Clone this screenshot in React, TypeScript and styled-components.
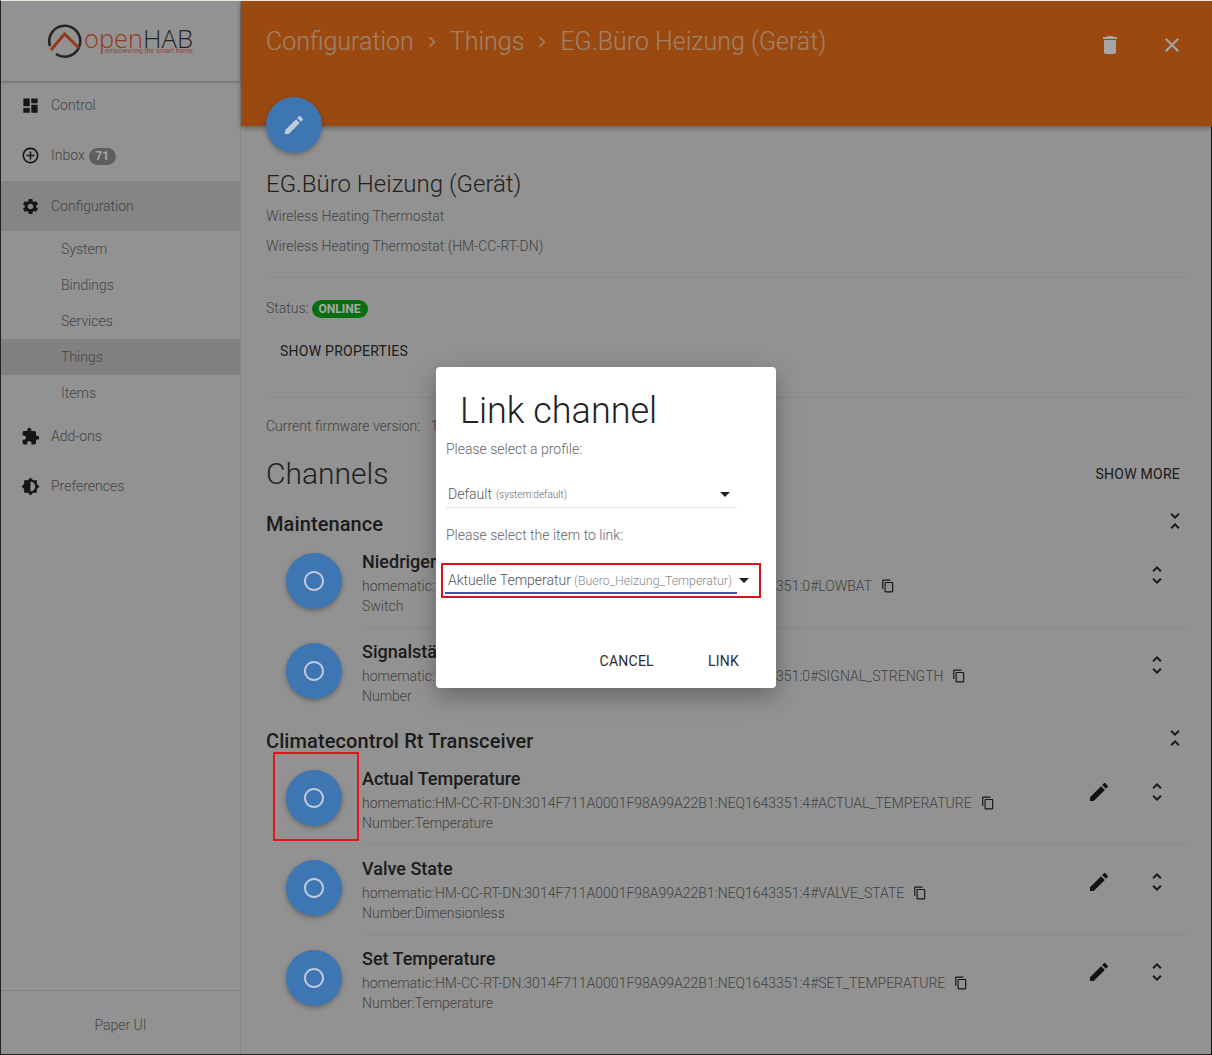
import React from "react";
import styled, { createGlobalStyle } from "styled-components";

const Global = createGlobalStyle`
  html, body { margin: 0; padding: 0; }
  body { font-family: Roboto, "Liberation Sans", sans-serif; font-weight: 300; font-size: 14px; color: #555; background: #e1e1e1; }
  * { box-sizing: border-box; }
`;

const P = {
  dashboard: "M3 13h8V3H3v10zm0 8h8v-6H3v6zm10 0h8V11h-8v10zm0-18v6h8V3h-8z",
  add: "M13 7h-2v4H7v2h4v4h2v-4h4v-2h-4V7zm-1-5C6.48 2 2 6.48 2 12s4.48 10 10 10 10-4.48 10-10S17.52 2 12 2zm0 18c-4.41 0-8-3.59-8-8s3.59-8 8-8 8 3.59 8 8-3.59 8-8 8z",
  settings: "M19.14 12.94c.04-.3.06-.61.06-.94 0-.32-.02-.64-.07-.94l2.03-1.58c.18-.14.23-.41.12-.61l-1.92-3.32c-.12-.22-.37-.29-.59-.22l-2.39.96c-.5-.38-1.03-.7-1.62-.94l-.36-2.54c-.04-.24-.24-.41-.48-.41h-3.84c-.24 0-.43.17-.47.41l-.36 2.54c-.59.24-1.13.57-1.62.94l-2.39-.96c-.22-.08-.47 0-.59.22L2.74 8.87c-.12.21-.08.47.12.61l2.03 1.58c-.05.3-.09.63-.09.94s.02.64.07.94l-2.03 1.58c-.18.14-.23.41-.12.61l1.92 3.32c.12.22.37.29.59.22l2.39-.96c.5.38 1.03.7 1.62.94l.36 2.54c.05.24.24.41.48.41h3.84c.24 0 .44-.17.47-.41l.36-2.54c.59-.24 1.13-.56 1.62-.94l2.39.96c.22.08.47 0 .59-.22l1.92-3.32c.12-.22.07-.47-.12-.61l-2.01-1.58zM12 15.6c-1.98 0-3.6-1.62-3.6-3.6s1.62-3.6 3.6-3.6 3.6 1.62 3.6 3.6-1.62 3.6-3.6 3.6z",
  extension: "M20.5 11H19V7c0-1.1-.9-2-2-2h-4V3.5C13 2.12 11.88 1 10.5 1S8 2.12 8 3.5V5H4c-1.1 0-1.99.9-1.99 2v3.8H3.5c1.49 0 2.7 1.21 2.7 2.7s-1.21 2.7-2.7 2.7H2V20c0 1.1.9 2 2 2h3.8v-1.5c0-1.49 1.21-2.7 2.7-2.7 1.49 0 2.7 1.21 2.7 2.7V22H17c1.1 0 2-.9 2-2v-4h1.5c1.38 0 2.5-1.12 2.5-2.5S21.88 11 20.5 11z",
  brightness: "M20 15.31L23.31 12 20 8.69V4h-4.69L12 .69 8.69 4H4v4.69L.69 12 4 15.31V20h4.69L12 23.31 15.31 20H20v-4.69zM12 18V6c3.31 0 6 2.69 6 6s-2.69 6-6 6z",
  edit: "M3 17.25V21h3.75L17.81 9.94l-3.75-3.75L3 17.25zM20.71 7.04c.39-.39.39-1.02 0-1.41l-2.34-2.34c-.39-.39-1.02-.39-1.41 0l-1.83 1.83 3.75 3.75 1.83-1.83z",
  del: "M6 19c0 1.1.9 2 2 2h8c1.1 0 2-.9 2-2V7H6v12zM19 4h-3.5l-1-1h-5l-1 1H5v2h14V4z",
  close: "M19 6.41L17.59 5 12 10.59 6.41 5 5 6.41 10.59 12 5 17.59 6.41 19 12 13.41 17.59 19 19 17.59 13.41 12z",
  copy: "M16 1H4c-1.1 0-2 .9-2 2v14h2V3h12V1zm3 4H8c-1.1 0-2 .9-2 2v14c0 1.1.9 2 2 2h11c1.1 0 2-.9 2-2V7c0-1.1-.9-2-2-2zm0 16H8V7h11v14z",
  more: "M12 5.83L15.17 9l1.41-1.41L12 3 7.41 7.59 8.83 9 12 5.83zm0 12.34L8.83 15l-1.41 1.41L12 21l4.59-4.59L15.17 15 12 18.17z",
  less: "M7.41 18.59L8.83 20 12 16.83 15.17 20l1.41-1.41L12 14l-4.59 4.59zm9.18-13.18L15.17 4 12 7.17 8.83 4 7.41 5.41 12 10l4.59-4.59z",
  ring: "M12 2C6.48 2 2 6.48 2 12s4.48 10 10 10 10-4.48 10-10S17.52 2 12 2zm0 18c-4.42 0-8-3.58-8-8s3.58-8 8-8 8 3.58 8 8-3.58 8-8 8z",
  chev: "M10 6L8.59 7.41 13.17 12l-4.58 4.59L10 18l6-6z",
  drop: "M7 10l5 5 5-5z",
};

const Svg = styled.svg<{ $s: number; $c?: string }>`
  width: ${(p) => p.$s}px;
  height: ${(p) => p.$s}px;
  flex: none;
  display: block;
  fill: ${(p) => p.$c ?? "#222"};
`;
const Icon = ({ d, s = 24, c }: { d: string; s?: number; c?: string }) => (
  <Svg viewBox="0 0 24 24" $s={s} $c={c}><path d={d} /></Svg>
);

const Frame = styled.div`
  position: relative;
  width: 1212px;
  height: 1055px;
  overflow: hidden;
  display: flex;
  background: #e1e1e1;
  border-top: 1px solid #f0e4d8;
  border-left: 1px solid #222;
  border-bottom: 1px solid #222;
`;
const Sidebar = styled.aside`
  width: 240px;
  flex: none;
  display: flex;
  flex-direction: column;
  border-right: 1px solid #d0d0d0;
`;
const LogoBar = styled.div`
  height: 80px;
  flex: none;
  display: flex;
  align-items: flex-start;
  padding-left: 45px;
  padding-top: 19px;
  box-shadow: 0 1px 3px rgba(0, 0, 0, 0.3);
`;
const LogoWord = styled.text<{ $c: string }>`
  font-family: "Open Sans", Roboto, sans-serif;
  font-size: 26px;
  font-weight: 300;
  fill: ${(p) => p.$c};
`;
const LogoTag = styled.text`
  font-family: Roboto, sans-serif;
  font-size: 7.4px;
  font-weight: 400;
  fill: #d9704a;
`;
const NavItem = styled.div<{ $active?: boolean; $lift?: boolean }>`
  height: 50px;
  display: flex;
  align-items: center;
  gap: 11px;
  padding-left: 20px;
  padding-bottom: ${(p) => (p.$lift ? 2 : 0)}px;
  color: #6a6a6a;
  background: ${(p) => (p.$active ? "#cdcdcd" : "transparent")};
`;
const Badge = styled.span`
  width: 27px;
  height: 17px;
  margin-left: -7px;
  margin-top: 3px;
  border-radius: 9px;
  background: #919191;
  color: #fff;
  font-size: 12px;
  font-weight: 700;
  line-height: 17px;
  text-align: center;
`;
const SubItem = styled.div<{ $active?: boolean }>`
  height: 36px;
  line-height: 36px;
  padding-left: 60px;
  color: #6a6a6a;
  background: ${(p) => (p.$active ? "#c6c6c6" : "transparent")};
`;
const SideFooter = styled.div`
  margin-top: auto;
  height: 64px;
  padding-top: 4px;
  border-top: 1px solid #c4c4c4;
  display: flex;
  align-items: center;
  justify-content: center;
  color: #6a6a6a;
`;
const Main = styled.main`
  flex: 1;
  min-width: 0;
  display: flex;
  flex-direction: column;
`;
const Header = styled.header`
  height: 125px;
  flex: none;
  background: #ed7219;
  padding: 24px 0 0 25px;
  display: flex;
  align-items: flex-start;
  box-shadow: 0 2px 5px rgba(0, 0, 0, 0.35);
  color: rgba(255, 255, 255, 0.62);
`;
const Crumb = styled.span`
  font-size: 25px;
  line-height: 34px;
  font-weight: 300;
`;
const CrumbSep = styled.span`
  width: 36px;
  height: 34px;
  display: flex;
  align-items: center;
  justify-content: center;
`;
const HeadIcons = styled.div`
  margin-left: auto;
  display: flex;
  gap: 38px;
  padding: 8px 28px 0 0;
`;
const Content = styled.div`
  flex: 1;
  padding: 0 25px;
  border-right: 1px solid #222;
`;
const Fab = styled.div<{ $top?: number }>`
  position: relative;
  z-index: 11;
  width: 56px;
  height: 56px;
  flex: none;
  border-radius: 50%;
  background: #3e75b3;
  display: flex;
  align-items: center;
  justify-content: center;
  box-shadow: 0 2px 5px rgba(0, 0, 0, 0.3);
  margin-top: ${(p) => p.$top ?? 0}px;
`;
const H1 = styled.h1`
  margin: 16px 0 0;
  font-size: 24px;
  line-height: 30px;
  font-weight: 300;
  color: #333;
`;
const Line = styled.div<{ $mt: number }>`
  margin-top: ${(p) => p.$mt}px;
  line-height: 20px;
  color: #666;
  white-space: nowrap;
`;
const Divider = styled.hr<{ $mt: number }>`
  margin: ${(p) => p.$mt}px 0 0;
  border: 0;
  height: 1px;
  background: #d4d4d4;
`;
const StatusRow = styled.div`
  margin-top: 18px;
  height: 24px;
  display: flex;
  align-items: center;
  gap: 3px;
  color: #666;
`;
const Pill = styled.span`
  width: 56px;
  height: 18px;
  margin-top: 2px;
  border-radius: 9px;
  background: #0daa1d;
  color: #fff;
  font-size: 12px;
  font-weight: 700;
  line-height: 18px;
  text-align: center;
`;
const FlatBtn = styled.div`
  height: 36px;
  line-height: 36px;
  font-size: 14px;
  font-weight: 400;
  letter-spacing: 0.25px;
  color: #2c2c2c;
  white-space: nowrap;
`;
const ShowProps = styled(FlatBtn)`
  margin-top: 13px;
  padding-left: 14px;
`;
const ShowMore = styled(FlatBtn)`
  margin-top: 2px;
`;
const ChannelsHead = styled.div`
  margin-top: 17px;
  height: 40px;
  display: flex;
  align-items: center;
  justify-content: space-between;
  padding-right: 6px;
`;
const H2 = styled.h2`
  margin: 0;
  font-size: 30px;
  font-weight: 300;
  color: #333;
`;
const GroupHead = styled.div<{ $mt: number }>`
  margin-top: ${(p) => p.$mt}px;
  height: 27px;
  display: flex;
  align-items: center;
  justify-content: space-between;
  font-size: 20px;
  font-weight: 500;
  letter-spacing: 0.1px;
  color: #2c2c2c;
  svg { margin-right: -1px; margin-top: -6px; }
`;
const Row = styled.div`
  height: 90px;
  display: flex;
  padding-left: 20px;
  gap: 20px;
`;
const RowFab = styled(Fab)`
  margin-top: 16px;
`;
const RowBody = styled.div<{ $line: boolean }>`
  flex: 1;
  min-width: 0;
  display: flex;
  padding-right: 17px;
  box-shadow: ${(p) => (p.$line ? "0 1px 0 #d4d4d4" : "none")};
`;
const RowText = styled.div`
  flex: 1;
  min-width: 0;
  padding-top: 14px;
`;
const RowTitle = styled.div`
  font-size: 18px;
  line-height: 22px;
  font-weight: 500;
  color: #2c2c2c;
`;
const RowUid = styled.div`
  margin-top: 3px;
  display: flex;
  align-items: center;
  gap: 9px;
  line-height: 20px;
  color: #666;
  white-space: nowrap;
`;
const RowType = styled.div`
  line-height: 20px;
  color: #666;
`;
const RowActions = styled.div`
  display: flex;
  gap: 34px;
  padding-top: 26px;
  align-items: flex-start;
`;
const Overlay = styled.div`
  position: absolute;
  inset: 0;
  z-index: 10;
  background: rgba(0, 0, 0, 0.35);
`;
const Dialog = styled.div`
  position: absolute;
  z-index: 20;
  left: 435px;
  top: 366px;
  width: 340px;
  height: 321px;
  background: #fff;
  border-radius: 4px;
  padding: 20px 10px 9px;
  display: flex;
  flex-direction: column;
  box-shadow: 0 8px 24px rgba(0, 0, 0, 0.3);
`;
const DialogTitle = styled.h3`
  margin: 0 0 0 14px;
  height: 48px;
  line-height: 48px;
  font-size: 36px;
  font-weight: 300;
  color: #222;
`;
const Prompt = styled.div<{ $mt: number }>`
  margin-top: ${(p) => p.$mt}px;
  line-height: 20px;
  color: #666;
`;
const SelectBox = styled.div`
  margin-top: 20px;
  width: 291px;
  height: 29px;
  display: flex;
  align-items: center;
  padding: 2px 0 0 2px;
  border-bottom: 1px solid #e0e0e0;
  color: #555;
`;
const Small = styled.span`
  margin-left: 4px;
  font-size: 10px;
  color: #666;
`;
const Grow = styled.div`
  flex: 1;
`;
const RedBox = styled.div`
  margin: 18px 0 0 -5px;
  width: 320px;
  height: 35px;
  border: 2px solid #d8131a;
  padding-left: 2px;
  display: flex;
  align-items: flex-start;
`;
const ActiveField = styled.div`
  width: 292px;
  height: 29px;
  padding-left: 3px;
  border-bottom: 2px solid #3f51b5;
  line-height: 30px;
  color: #555;
  white-space: nowrap;
`;
const ItemName = styled.span`
  margin-left: 3px;
  font-size: 12.4px;
  color: #8a8a8a;
`;
const DropAt = styled.div`
  margin: 3px 0 0 -5px;
`;
const DialogActions = styled.div`
  margin-top: auto;
  display: flex;
  justify-content: flex-end;
  gap: 54px;
  padding-right: 27px;
`;
const Marker = styled.div`
  position: absolute;
  z-index: 12;
  left: 272px;
  top: 751px;
  width: 86px;
  height: 89px;
  border: 2px solid #e0161c;
`;

const uid = "homematic:HM-CC-RT-DN:3014F711A0001F98A99A22B1:NEQ1643351";

type Ch = { title: string; suffix: string; type: string; edit?: boolean };
const maintenance: Ch[] = [
  { title: "Niedriger Batteriestand", suffix: "0#LOWBAT", type: "Switch" },
  { title: "Signalstärke", suffix: "0#SIGNAL_STRENGTH", type: "Number" },
];
const climate: Ch[] = [
  { title: "Actual Temperature", suffix: "4#ACTUAL_TEMPERATURE", type: "Number:Temperature", edit: true },
  { title: "Valve State", suffix: "4#VALVE_STATE", type: "Number:Dimensionless", edit: true },
  { title: "Set Temperature", suffix: "4#SET_TEMPERATURE", type: "Number:Temperature", edit: true },
];

const Channel = ({ ch, line }: { ch: Ch; line: boolean }) => (
  <Row>
    <RowFab><Icon d={P.ring} s={24} c="#c0cbd9" /></RowFab>
    <RowBody $line={line}>
      <RowText>
        <RowTitle>{ch.title}</RowTitle>
        <RowUid>{uid}:{ch.suffix}<Icon d={P.copy} s={14} c="#222" /></RowUid>
        <RowType>{ch.type}</RowType>
      </RowText>
      <RowActions>
        {ch.edit && <Icon d={P.edit} c="#1c1c1c" />}
        <Icon d={P.more} c="#2a2a2a" />
      </RowActions>
    </RowBody>
  </Row>
);

export default function App() {
  return (
    <Frame>
      <Global />
      <Sidebar>
        <LogoBar>
          <svg width="170" height="42" viewBox="0 0 170 42" role="img" aria-label="openHAB">
            <path d="M4 26 A15.5 15.5 0 1 1 10 34" fill="none" stroke="#3a3a3a" strokeWidth="2.6" />
            <path d="M5 30 L18.5 14 L33 28" fill="none" stroke="#e5562a" strokeWidth="3" />
            <LogoWord x="38" y="28" $c="#e5562a" textLength="59" lengthAdjust="spacingAndGlyphs">open</LogoWord>
            <LogoWord x="97" y="28" $c="#3a3a3a" textLength="50" lengthAdjust="spacingAndGlyphs">HAB</LogoWord>
            <LogoTag x="59" y="33" textLength="88" lengthAdjust="spacingAndGlyphs">empowering the smart home</LogoTag>
          </svg>
        </LogoBar>
        <NavItem $lift><Icon d={P.dashboard} s={19} /> Control</NavItem>
        <NavItem $lift><Icon d={P.add} s={19} /> Inbox <Badge>71</Badge></NavItem>
        <NavItem $active><Icon d={P.settings} s={19} /> Configuration</NavItem>
        <SubItem>System</SubItem>
        <SubItem>Bindings</SubItem>
        <SubItem>Services</SubItem>
        <SubItem $active>Things</SubItem>
        <SubItem>Items</SubItem>
        <NavItem><Icon d={P.extension} s={19} /> Add-ons</NavItem>
        <NavItem><Icon d={P.brightness} s={19} /> Preferences</NavItem>
        <SideFooter>Paper UI</SideFooter>
      </Sidebar>
      <Main>
        <Header>
          <Crumb>Configuration</Crumb>
          <CrumbSep><Icon d={P.chev} s={22} c="rgba(255,255,255,.55)" /></CrumbSep>
          <Crumb>Things</Crumb>
          <CrumbSep><Icon d={P.chev} s={22} c="rgba(255,255,255,.55)" /></CrumbSep>
          <Crumb>EG.Büro Heizung (Gerät)</Crumb>
          <HeadIcons>
            <Icon d={P.del} c="#fff" />
            <Icon d={P.close} c="#fff" />
          </HeadIcons>
        </Header>
        <Content>
          <Fab $top={-29}><Icon d={P.edit} c="#c0cbd9" /></Fab>
          <H1>EG.Büro Heizung (Gerät)</H1>
          <Line $mt={7}>Wireless Heating Thermostat</Line>
          <Line $mt={10}>Wireless Heating Thermostat (HM-CC-RT-DN)</Line>
          <Divider $mt={21} />
          <StatusRow>Status: <Pill>ONLINE</Pill></StatusRow>
          <ShowProps>SHOW PROPERTIES</ShowProps>
          <Divider $mt={28} />
          <Line $mt={18}>Current firmware version: {"\u00a0\u00a0"}1.4</Line>
          <ChannelsHead>
            <H2>Channels</H2>
            <ShowMore>SHOW MORE</ShowMore>
          </ChannelsHead>
          <GroupHead $mt={17}>Maintenance<Icon d={P.less} c="#2a2a2a" /></GroupHead>
          {maintenance.map((c, i) => <Channel key={c.suffix} ch={c} line={i === 0} />)}
          <GroupHead $mt={10}>Climatecontrol Rt Transceiver<Icon d={P.less} c="#2a2a2a" /></GroupHead>
          {climate.map((c, i) => <Channel key={c.suffix} ch={c} line={i < 2} />)}
        </Content>
      </Main>
      <Overlay />
      <Marker />
      <Dialog>
        <DialogTitle>Link channel</DialogTitle>
        <Prompt $mt={4}>Please select a profile:</Prompt>
        <SelectBox>
          Default <Small>(system:default)</Small>
          <Grow />
          <Icon d={P.drop} c="#222" />
        </SelectBox>
        <Prompt $mt={17}>Please select the item to link:</Prompt>
        <RedBox>
          <ActiveField>Aktuelle Temperatur<ItemName>(Buero_Heizung_Temperatur)</ItemName></ActiveField>
          <DropAt><Icon d={P.drop} c="#222" /></DropAt>
        </RedBox>
        <DialogActions>
          <FlatBtn>CANCEL</FlatBtn>
          <FlatBtn>LINK</FlatBtn>
        </DialogActions>
      </Dialog>
    </Frame>
  );
}
